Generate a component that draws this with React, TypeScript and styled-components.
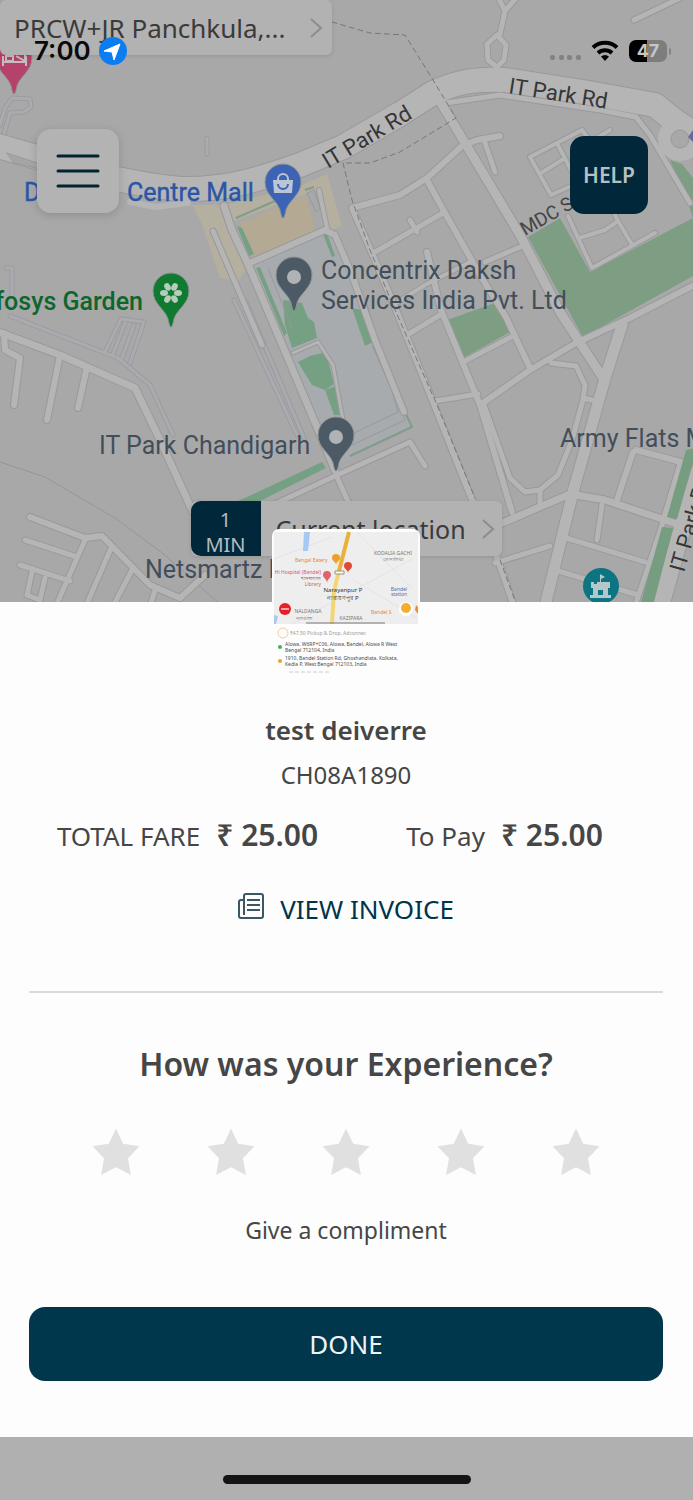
import React, { useState } from "react";
import styled, { createGlobalStyle } from "styled-components";

const Reset = createGlobalStyle`
  * { box-sizing: border-box; }
  body { margin: 0; background: #b0b0b0; font-family: "Noto Sans", "Open Sans", sans-serif; color: #464646; }
  button, a { font-family: inherit; }
`;

const Page = styled.div`
  min-height: 100vh;
  display: flex;
  flex-direction: column;
`;

const MapArea = styled.header`
  position: relative;
  flex: 1;
  min-height: 600px;
  overflow: hidden;
  background: #a8a8a9;
`;

const MapCanvas = styled.svg`
  position: absolute;
  inset: 0;
  width: 100%;
  height: 100%;
  font-family: Roboto, "Liberation Sans", sans-serif;
`;

const AddressPill = styled.button`
  position: absolute;
  display: flex;
  align-items: center;
  justify-content: space-between;
  height: 55px;
  padding: 0 8px 0 14px;
  border: 0;
  border-radius: 6px;
  background: #b2b2b2;
  color: #3a3a3a;
  font-size: 26px;
  line-height: 32px;
  white-space: nowrap;
  box-shadow: 0 1px 4px rgba(0, 0, 0, 0.12);
`;

const PickupPill = styled(AddressPill)`
  top: 0;
  left: 0;
  width: 332px;
`;

const DropPill = styled(AddressPill)`
  top: 501px;
  left: calc(50% - 156px);
  width: 311px;
  padding: 0 6px 0 0;
  font-size: 25px;
`;

const DropText = styled.span`
  flex: 1;
  padding-left: 15px;
  text-align: left;
`;

const Eta = styled.span`
  width: 70px;
  height: 55px;
  padding-top: 6px;
  border-radius: 10px 0 0 10px;
  background: #00283a;
  color: #b4bcc0;
  font-size: 20px;
  line-height: 25px;
  text-align: center;
`;

const StatusBar = styled.div`
  position: relative;
  display: flex;
  align-items: center;
  justify-content: space-between;
  padding: 35px 26px 0 34px;
  height: 66px;
`;

const StatusGroup = styled.div`
  display: flex;
  align-items: center;
  gap: 8px;
`;

const Clock = styled.time`
  color: #0a0a0a;
  font: 600 26px/30px Inter, sans-serif;
`;

const Battery = styled.span`
  position: relative;
  width: 38px;
  height: 22px;
  margin-left: 2px;
  border-radius: 7px;
  background: linear-gradient(90deg, #000 48%, #7d7d7d 48%);
  color: #c6c6c6;
  font: 700 18px/22px Inter, sans-serif;
  text-align: center;

  &::after {
    content: "";
    position: absolute;
    top: 8px;
    right: -4px;
    width: 2px;
    height: 7px;
    border-radius: 0 2px 2px 0;
    background: #858585;
  }
`;

const Controls = styled.div`
  position: relative;
  display: flex;
  align-items: center;
  justify-content: space-between;
  padding: 62px 45px 0 37px;
`;

const MenuButton = styled.button`
  display: grid;
  place-items: center;
  width: 82px;
  height: 84px;
  padding: 0;
  border: 0;
  border-radius: 14px;
  background: #b3b3b3;
  box-shadow: 0 2px 10px rgba(0, 0, 0, 0.16);
`;

const HelpButton = styled.button`
  width: 78px;
  height: 78px;
  padding: 0;
  margin-top: 8px;
  border: 0;
  border-radius: 14px;
  background: #00283a;
  color: #b8bfc3;
  font-size: 21px;
  font-weight: 600;
`;

const Sheet = styled.main`
  display: flex;
  flex-direction: column;
  align-items: center;
  padding: 0 30px 56px 29px;
  background: #fdfdfd;
`;

const Avatar = styled.svg`
  position: relative;
  width: 148px;
  height: 144px;
  margin-top: -73px;
  margin-bottom: 39px;
  font-family: "Noto Sans", sans-serif;
`;

const DriverName = styled.h1`
  margin: 0;
  font-size: 26px;
  line-height: 36px;
  font-weight: 600;
`;

const Plate = styled.p`
  margin: 11px 0 26px;
  font-size: 24px;
  line-height: 32px;
`;

const Fares = styled.dl`
  display: grid;
  grid-template-columns: 1fr 1fr;
  width: 100%;
  margin: 0;
`;

const Fare = styled.div`
  display: flex;
  align-items: baseline;
  justify-content: center;
  gap: 16px;
  font-size: 26px;
  line-height: 36px;
`;

const Amount = styled.dd`
  margin: 0;
  font-size: 30px;
  font-weight: 600;
`;

const InvoiceLink = styled.a`
  display: flex;
  align-items: center;
  gap: 16px;
  margin-top: 37px;
  color: #00344b;
  font-size: 26px;
  line-height: 36px;
  text-decoration: none;
`;

const Divider = styled.hr`
  width: 100%;
  height: 2px;
  margin: 64px 0 51px;
  border: 0;
  background: #dadada;
`;

const Rating = styled.fieldset`
  display: flex;
  flex-wrap: wrap;
  justify-content: space-between;
  width: 100%;
  margin: 0;
  padding: 0 63px;
  border: 0;
`;

const Question = styled.legend`
  width: 100%;
  padding: 0;
  margin-bottom: 44px;
  font-size: 32px;
  line-height: 40px;
  font-weight: 600;
  text-align: center;
`;

const Star = styled.input<{ $on: boolean }>`
  appearance: none;
  width: 48px;
  height: 48px;
  margin: 0;
  background: ${(p) => (p.$on ? "#f5b82e" : "#e0e0e0")};
  clip-path: polygon(50% 1%, 65% 33%, 99% 38%, 75% 63%, 81% 98%, 50% 82%, 19% 98%, 25% 63%, 1% 38%, 35% 33%);
`;

const Compliment = styled.p`
  margin: 38px 0 61px;
  font-size: 23px;
  line-height: 32px;
`;

const DoneButton = styled.button`
  width: 100%;
  height: 74px;
  border: 0;
  border-radius: 16px;
  background: #00374d;
  color: #eef4f6;
  font-size: 26px;
`;

const HomeArea = styled.footer`
  display: flex;
  justify-content: center;
  height: 63px;
  padding-top: 38px;
`;

const HomeIndicator = styled.div`
  width: 248px;
  height: 9px;
  border-radius: 5px;
  background: #141414;
`;

type Road = [string, number];

const roads: Road[] = [
  ["M505 11 500 34M505 11 498 -3M505 11 518 -4M497 68V80", 5],
  ["M497 35 506 45 504 60 497 67 488 60 487 44Z", 5],
  ["M634 20 680 -2", 5],
  ["M446 103 500 95 600 110 636 117 650 135 690 203", 5],
  ["M438 98 462 138 520 235 560 312 603 378", 9],
  ["M500 136 477 140 462 146 427 178 400 195 352 208 375 260 392 300 433 402 470 495 495 552 514 606", 6],
  ["M484 140 495 172", 5],
  ["M427 180 445 213 480 275 506 317 530 368", 6],
  ["M375 252 443 213M410 220 417 232M485 262 520 247", 5],
  ["M427 252 441 310 480 405 512 512", 6],
  ["M407 335 440 315M435 401 478 394M465 361 515 335", 5],
  ["M393 305 425 285 470 262", 4],
  ["M480 405 530 370 576 343 630 318 696 284", 6],
  ["M622 325 606 375 573 492 545 606", 11],
  ["M551 363 576 366 585 385 583 400 572 440 558 475 540 490 525 492 510 478 484 405M540 490V505M583 398 592 400", 5],
  ["M500 524 570 494 605 500 680 525", 7],
  ["M633 452 616 503M636 450 681 462M681 462 663 522", 6],
  ["M602 505 597 540M563 537 645 562M663 522 635 606M555 570 638 595", 5],
  ["M495 563 550 546", 5],
  ["M530 157 582 130 592 144M530 157 551 195 578 183M558 145 572 172M541 173 562 160M590 142 610 130", 4],
  ["M568 216 592 268 655 233M579 238 605 230 618 221 610 205M618 221 631 243", 4],
  ["M-4 331 60 355 135 388 160 440 193 512", 7],
  ["M4 333 5 350 20 358 14 405M60 355 47 420M87 367 78 408", 6],
  ["M30 517 85 538 102 536 150 585 180 598 205 575", 6],
  ["M25 540 77 557M20 565 70 581M85 540 55 608M112 546 85 608M132 570 112 608M155 590 150 606M32 572 27 595 40 600M45 578 40 600", 5],
  ["M224 206 232 230 248 264 276 330 335 470", 7],
  ["M252 262 325 230 335 235 352 275 375 340 404 412", 6],
  ["M319 190 327 228", 4],
  ["M213 231 262 345", 5],
  ["M262 510 335 476 410 442 425 466M336 475 352 510", 5],
  ["M293 353 318 342M318 342 333 365 343 420", 3],
  ["M700 470 682 530 660 608", 17],
];

const mainRoad =
  "M-5 145 40 158C90 174 135 185 180 189 230 190 262 178 300 165L343 147 400 114 433 93C460 80 480 79 505 80L583 92 655 105 676 122 700 137";

const outlines =
  "M10 316 118 358 150 385 173 435M105 352 121 319 144 322 130 363M113 354 125 323M122 358 134 325M0 125 5 108 12 98 30 99 31 107 24 112 10 113 3 137M12 305V268H6M234 300 297 435M246 302 304 438M207 138V154";

const boundary = "M0 462 45 477 115 518 165 555 222 606";

const dashes =
  "M332 22 370 33 405 35 433 80 456 118 400 152 370 163 343 163M343 163 352 200 370 250 392 303 437 405 475 498M500 560 517 606";

function Pin({ x, y, color, children }: { x: number; y: number; color: string; children?: React.ReactNode }) {
  return (
    <g transform={`translate(${x} ${y})`}>
      <path
        d="M0 54C-1 54-2 51-3 46-6 36-18 31-18 18a18 18 0 0 1 36 0C18 31 6 36 3 46 2 51 1 54 0 54Z"
        fill={color}
        stroke="#8f9396"
        strokeWidth="1"
      />
      {children}
    </g>
  );
}

function CityMap() {
  return (
    <MapCanvas viewBox="0 0 693 603" preserveAspectRatio="xMidYMin slice" role="img" aria-label="Map">
      <rect width="693" height="603" fill="#a8a8a9" />
      <path d="M192 205H222L245 270 238 282 220 278 202 224ZM224 205 300 186 327 174 342 226 327 232 316 190 232 222Z" fill="#b4af9e" />
      <path d="M252 264 328 233 345 268 410 425 338 465Z" fill="#a8abae" />
      <path d="M240 223 306 195 315 230 253 258Z" fill="#b4a992" />
      <g fill="#7d9e83">
        <path d="M528 237 560 218 590 272 693 218V276L583 337Z" />
        <path d="M670 160 682 164 693 178V218L686 196Z" />
        <path d="M447 320 495 303 510 332 463 358Z" />
      </g>
      <g fill="#76a083">
        <path d="M283 300 302 303 308 318 314 322 317 338 292 348 285 325Z" />
        <path d="M298 362 310 356 326 352 334 384 325 390 312 385 304 372Z" />
        <path d="M325 390 336 386 341 415 334 415Z" />
        <path d="M352 308 362 310 373 342 365 346Z" />
        <path d="M236 502 322 462 326 468 256 503Z" />
        <path d="M237 226 242 228 254 254 249 256ZM256 268 260 267 287 333 284 336ZM323 234 327 233 335 256 332 257Z" />
      </g>
      <path d="M236 218 275 201M305 190 314 187M373 345 412 427 350 456" fill="none" stroke="#7f9d88" strokeWidth="2" />
      <path d="M366 300 398 412 352 434M372 345 405 420 350 446M307 193 314 190 320 208 316 212ZM268 268 292 328" fill="none" stroke="#96989c" strokeWidth="1" />
      <g fill="none" strokeLinejoin="round" strokeLinecap="round">
        <path d={boundary} stroke="#96969a" strokeWidth="1" />
        <path d={outlines} stroke="#9a9aa2" strokeWidth="5" />
        <path d={outlines} stroke="#ababae" strokeWidth="3" />
        {roads.map(([d, w]) => (
          <path key={d} d={d} stroke="#99999b" strokeWidth={w + 2} />
        ))}
        <path d={mainRoad} stroke="#99999b" strokeWidth="26" />
        <circle cx="680" cy="139" r="22" fill="#b5b5b6" />
        {roads.map(([d, w]) => (
          <path key={d} d={d} stroke="#b5b5b6" strokeWidth={w} />
        ))}
        <path d={mainRoad} stroke="#b5b5b6" strokeWidth="24" />
        <path d="M130 202 155 207 188 203" stroke="#b5b5b6" strokeWidth="6" />
        <path d="M7 153 40 164V169L14 163Z" fill="#a5a5a7" stroke="#99999b" />
        <path d={dashes} stroke="#77777a" strokeWidth="1" strokeDasharray="5 4" />
      </g>
      <circle cx="680" cy="139" r="9" fill="#a8a8a9" stroke="#99999b" />
      <path d="m693 130-5 7 5 5Z" fill="#656a9a" />
      <path d="M686 450 697 448 677 519 667 517ZM662 527 673 528 653 606H640Z" fill="#779d80" />

      <g fontSize="25">
        <g fill="#2b56a6" stroke="#2b56a6" strokeWidth="0.4">
          <text x="24" y="201">D</text>
          <text x="127" y="201">Centre Mall</text>
        </g>
        <text x="143" y="310" textAnchor="end" fontWeight="500" fill="#0d662c">fosys Garden</text>
        <g fill="#424f5b">
          <text x="321" y="279">Concentrix Daksh</text>
          <text x="321" y="309">Services India Pvt. Ltd</text>
          <text x="99" y="454">IT Park Chandigarh</text>
          <text x="560" y="447">Army Flats M</text>
          <text x="145" y="578">Netsmartz H</text>
        </g>
      </g>
      <g fontSize="22" fill="#363636">
        <text transform="translate(328 169) rotate(-31)">IT Park Rd</text>
        <text transform="translate(508 93) rotate(9)">IT Park Rd</text>
        <text transform="translate(684 573) rotate(-74)">IT Park R</text>
        <text transform="translate(525 236) rotate(-30)" fontSize="19" fill="#444">MDC Se</text>
      </g>

      <Pin x={14} y={40} color="#b5426a">
        <path d="M-11 16V26M12 16V26M-11 22H12M-8 16h7v5h-7ZM2 16l9 5V15" fill="none" stroke="#c5bcc0" strokeWidth="2" />
      </Pin>
      <Pin x={283} y={164} color="#3c63b4">
        <path d="M-10 16H10L9 29H-9Z" fill="#bcc5d4" />
        <path d="M-5 17V15a5 5 0 0 1 10 0v2" fill="none" stroke="#bcc5d4" strokeWidth="2" />
        <path d="M-5 20a5 5 0 0 0 10 0" fill="none" stroke="#3c63b4" strokeWidth="2" />
      </Pin>
      <Pin x={171} y={273} color="#0f7a30">
        {[30, 90, 150, 210, 270, 330].map((a) => (
          <ellipse key={a} cx="0" cy="-7" rx="3" ry="4" fill="#b6cdbb" transform={`translate(0 20) rotate(${a})`} />
        ))}
      </Pin>
      <Pin x={294} y={257} color="#4b5a65">
        <circle cy="20" r="7" fill="#b0b3b5" />
      </Pin>
      <Pin x={336} y={417} color="#4b5a65">
        <circle cy="20" r="7" fill="#b0b3b5" />
      </Pin>
      <circle cx="601" cy="586" r="18" fill="#0d7482" />
      <path d="M600 582V574l5 3-4 2v3h9v6h-2v7h3v3h-21v-3h3v-7h-2v-6h3v2h3v-2ZM598 595h5v-5h-5Z" fill="#b5c7ca" fillRule="evenodd" />
    </MapCanvas>
  );
}

function Chevron() {
  return (
    <svg width="16" height="26" viewBox="0 0 16 26" fill="none" stroke="#8d8d8d" strokeWidth="2" aria-hidden="true">
      <path d="M3 4 13 13 3 22" />
    </svg>
  );
}

function TripThumbnail() {
  return (
    <Avatar viewBox="0 0 148 144" role="img" aria-label="Driver photo">
      <clipPath id="thumb"><rect width="148" height="150" rx="7" /></clipPath>
      <g clipPath="url(#thumb)">
        <rect width="148" height="144" fill="#fdfdfd" />
        <rect x="2" y="3" width="144" height="92" fill="#eeeeef" />
        <path d="M2 30 60 8M20 95 140 30M80 50 146 90M85 3 140 60" stroke="#e3e3e5" strokeWidth="1" />
        <path d="M32 3h6l-2 19h-5ZM2 86l4 1-2 8H2Z" fill="#a6c8f2" />
        <path d="M77 3 67 42" stroke="#e9b13a" strokeWidth="4" />
        <path d="M67 42 62 62 60 95" stroke="#f2d676" strokeWidth="4" fill="none" />
        <path d="M63 42h9v3h-9Z" fill="#fff" stroke="#9b8f79" />
        <path d="M64 36c0-3-4-4-4-7a4 4 0 0 1 8 0c0 3-4 4-4 7Z" fill="#eda12c" />
        <path d="M76 44c0-3-4-4-4-7a4 4 0 0 1 8 0c0 3-4 4-4 7Z" fill="#df4b3b" />
        <path d="M55 54c0-4-4-5-4-8a4 4 0 0 1 8 0c0 3-4 4-4 8Z" fill="#e0636a" />
        <g fontSize="5">
          <text x="23" y="33" fill="#e38a3a">Bengal Eatery</text>
          <g fill="#d9586a" textAnchor="end">
            <text x="49" y="45">Hi Hospital (Bandel)</text>
            <text x="49" y="51" fill="#7d4750">হাসপাতাল</text>
            <text x="49" y="57">Library</text>
          </g>
          <g fill="#333" fontSize="6" textAnchor="middle">
            <text x="71" y="63">Narayanpur P</text>
            <text x="71" y="71">নারায়ণপুর P</text>
          </g>
          <g fill="#777" textAnchor="middle">
            <text x="121" y="26">KODALIA GACHI</text>
            <text x="121" y="32">কোদালিয়া</text>
            <text x="36" y="84">NALDANGA</text>
            <text x="32" y="91">নলডাঙ্গা</text>
            <text x="79" y="91">KAZIPARA</text>
          </g>
          <g fill="#5a6fa5" textAnchor="middle">
            <text x="127" y="62">Bandel</text>
            <text x="127" y="67">station</text>
          </g>
          <text x="99" y="85" fill="#e38a3a">Bandel S</text>
        </g>
        <circle cx="13" cy="80" r="6" fill="#e5202a" />
        <path d="M9 80h8" stroke="#f6a0a4" strokeWidth="2" />
        <circle cx="134" cy="80" r="7" fill="#fff" />
        <circle cx="134" cy="79" r="5" fill="#f2ae2d" />
        <path d="M144 76l2 2v7l-3-4Z" fill="#e9902d" />
        <path d="M34 94h79" stroke="#777" strokeWidth="1" />
        <circle cx="11" cy="104" r="5" fill="none" stroke="#f0cf9c" />
        <circle cx="8" cy="118" r="2" fill="#48a95a" />
        <circle cx="8" cy="132" r="2" fill="#e9a13a" />
        <g fontSize="5" fill="#4a4a4a">
          <text x="18" y="106" fill="#9b9b9b">₹47.50 Pickup &amp; Drop, Adconnec</text>
          <text x="13" y="117">Alowa, W6RP+C06, Alowa, Bandel, Alowa R West</text>
          <text x="13" y="123">Bengal 712104, India</text>
          <text x="13" y="131">1910, Bandel Station Rd, Ghoshandiata, Kolkata,</text>
          <text x="13" y="137">Kedia P, West Bengal 712103, India</text>
        </g>
        <path d="M17 143h40" stroke="#ccc" strokeDasharray="4 2" />
      </g>
    </Avatar>
  );
}

export default function App() {
  const [stars, setStars] = useState(0);
  return (
    <Page>
      <Reset />
      <MapArea>
        <CityMap />
        <PickupPill>
          PRCW+JR Panchkula,...
          <Chevron />
        </PickupPill>
        <DropPill>
          <Eta>1<br />MIN</Eta>
          <DropText>Current location</DropText>
          <Chevron />
        </DropPill>
        <StatusBar>
          <StatusGroup>
            <Clock>7:00</Clock>
            <svg width="28" height="28" viewBox="0 0 28 28" aria-hidden="true">
              <circle cx="14" cy="14" r="14" fill="#0b7df2" />
              <path d="M21 7 5 14l8 1 2 8Z" fill="#fff" stroke="#fff" strokeWidth="1" strokeLinejoin="round" />
            </svg>
          </StatusGroup>
          <StatusGroup>
            <svg width="34" height="20" viewBox="0 0 34 20" fill="#828282" aria-hidden="true">
              <rect x="1" y="14" width="5" height="5" rx="2" />
              <rect x="10" y="14" width="5" height="5" rx="2" />
              <rect x="18" y="14" width="5" height="5" rx="2" />
              <rect x="27" y="14" width="5" height="5" rx="2" />
            </svg>
            <svg width="28" height="21" viewBox="0 0 28 21" aria-hidden="true">
              <g fill="none" stroke="#000" strokeWidth="4">
                <path d="M2 7.500a17.500 17.500 0 0 1 24 0" />
                <path d="M7 13a10.500 10.500 0 0 1 14 0" />
              </g>
              <path d="m14 21-4-4.500a6 6 0 0 1 8 0Z" />
            </svg>
            <Battery>47</Battery>
          </StatusGroup>
        </StatusBar>
        <Controls>
          <MenuButton aria-label="Menu">
            <svg width="44" height="34" viewBox="0 0 44 34" stroke="#00252c" strokeWidth="3" strokeLinecap="round" aria-hidden="true">
              <path d="M2 2H42M2 17H42M2 32H42" />
            </svg>
          </MenuButton>
          <HelpButton>HELP</HelpButton>
        </Controls>
      </MapArea>
      <Sheet>
        <TripThumbnail />
        <DriverName>test deiverre</DriverName>
        <Plate>CH08A1890</Plate>
        <Fares>
          <Fare>
            <dt>TOTAL FARE</dt>
            <Amount>₹ 25.00</Amount>
          </Fare>
          <Fare>
            <dt>To Pay</dt>
            <Amount>₹ 25.00</Amount>
          </Fare>
        </Fares>
        <InvoiceLink href="#invoice">
          <svg width="26" height="32" viewBox="0 0 26 32" fill="none" stroke="#3c5663" strokeWidth="2" strokeLinejoin="round" aria-hidden="true">
            <path d="M6 3a2 2 0 0 1 2-2H23a2 2 0 0 1 2 2V23a2 2 0 0 1-2 2H3a2 2 0 0 1-2-2V9a2 2 0 0 1 2-2H6Z" />
            <path d="M6 7V22M9 7H22M9 12H22M9 17H22" />
          </svg>
          VIEW INVOICE
        </InvoiceLink>
        <Divider />
        <Rating>
          <Question>How was your Experience?</Question>
          {[1, 2, 3, 4, 5].map((n) => (
            <Star
              key={n}
              type="radio"
              name="rating"
              aria-label={`${n} stars`}
              $on={n <= stars}
              checked={stars === n}
              onChange={() => setStars(n)}
            />
          ))}
        </Rating>
        <Compliment>Give a compliment</Compliment>
        <DoneButton>DONE</DoneButton>
      </Sheet>
      <HomeArea>
        <HomeIndicator />
      </HomeArea>
    </Page>
  );
}
